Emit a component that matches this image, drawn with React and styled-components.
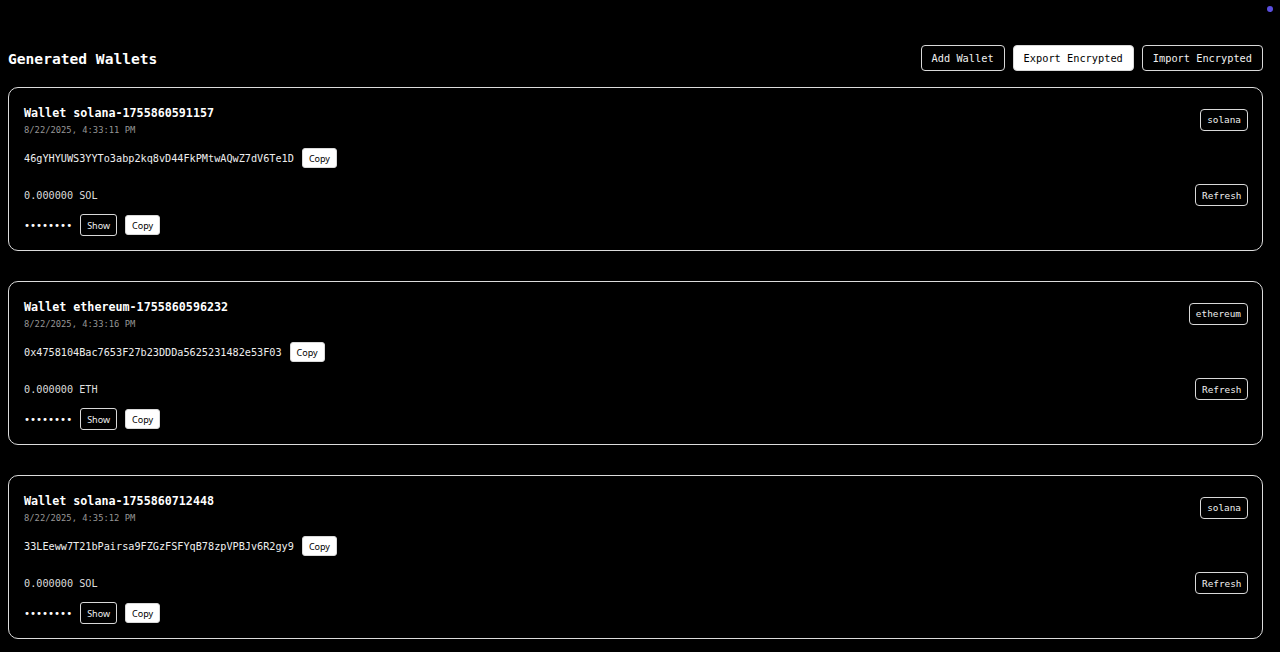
import React from 'react';
import styled, { createGlobalStyle } from 'styled-components';

const GlobalStyle = createGlobalStyle`
  html, body {
    margin: 0;
    padding: 0;
    background: #000;
    color: #fff;
    font-family: "DejaVu Sans Mono", "Liberation Mono", monospace;
  }
`;

const Page = styled.div`
  position: relative;
  min-height: 652px;
  padding: 45px 17px 20px 8px;
  box-sizing: border-box;
`;

const StatusDot = styled.span`
  position: absolute;
  top: 6px;
  right: 7px;
  width: 6px;
  height: 6px;
  border-radius: 50%;
  background: #5b4fe0;
`;

const TopBar = styled.div`
  display: flex;
  align-items: center;
  justify-content: space-between;
  margin-bottom: 16px;
`;

const Heading = styled.h2`
  margin: 0;
  font-size: 14.6px;
  font-weight: bold;
  letter-spacing: 0;
`;

const Actions = styled.div`
  display: flex;
  gap: 8px;
`;

const Button = styled.button`
  font-family: "DejaVu Sans Mono", monospace;
  font-size: ${(p) => (p.small ? '9.4px' : '10.3px')};
  height: ${(p) => (p.small ? '22px' : '26px')};
  padding: 0 ${(p) => (p.small ? '5.5px' : '10px')};
  border-radius: 4px;
  border: 1px solid #d9d9d9;
  background: ${(p) => (p.filled ? '#fff' : '#000')};
  color: ${(p) => (p.filled ? '#000' : '#f0f0f0')};
  cursor: pointer;
`;

const MiniButton = styled.button`
  font-family: "Noto Sans", "Liberation Sans", sans-serif;
  font-size: 9px;
  height: ${(p) => (p.filled ? '20px' : '22px')};
  padding: 0 6px;
  border-radius: 3px;
  border: 1px solid #d9d9d9;
  background: ${(p) => (p.filled ? '#fff' : '#000')};
  color: ${(p) => (p.filled ? '#000' : '#f0f0f0')};
`;

const List = styled.div`
  display: flex;
  flex-direction: column;
  gap: 30px;
`;

const Card = styled.div`
  border: 1px solid #dcdcdc;
  border-radius: 10px;
  padding: 17px 14px 14px 15px;
  height: 164px;
  box-sizing: border-box;
  display: flex;
  flex-direction: column;
`;

const Row = styled.div`
  display: flex;
  align-items: center;
  justify-content: space-between;
`;

const Title = styled.div`
  font-size: 11.7px;
  font-weight: bold;
  line-height: 16px;
`;

const DateText = styled.div`
  font-size: 8.8px;
  color: #969696;
  margin-top: 4px;
`;

const Badge = styled.span`
  font-size: 9.4px;
  height: 22px;
  line-height: 20px;
  padding: 0 6px;
  border: 1px solid #d9d9d9;
  border-radius: 4px;
  box-sizing: border-box;
  color: #eee;
`;

const AddressRow = styled.div`
  display: flex;
  align-items: center;
  gap: 8px;
  margin-top: 13px;
  font-size: 10.2px;
  color: #eee;
`;

const BalanceRow = styled(Row)`
  margin-top: 16px;
  font-size: 10.2px;
  color: #ddd;
`;

const KeyRow = styled.div`
  display: flex;
  align-items: center;
  gap: 8px;
  margin-top: 8px;
`;

const Dots = styled.span`
  font-size: 10px;
  color: #fff;
`;

const wallets = [
  {
    name: 'solana-1755860591157',
    date: '8/22/2025, 4:33:11 PM',
    address: '46gYHYUWS3YYTo3abp2kq8vD44FkPMtwAQwZ7dV6Te1D',
    chain: 'solana',
    symbol: 'SOL',
  },
  {
    name: 'ethereum-1755860596232',
    date: '8/22/2025, 4:33:16 PM',
    address: '0x4758104Bac7653F27b23DDDa5625231482e53F03',
    chain: 'ethereum',
    symbol: 'ETH',
  },
  {
    name: 'solana-1755860712448',
    date: '8/22/2025, 4:35:12 PM',
    address: '33LEeww7T21bPairsa9FZGzFSFYqB78zpVPBJv6R2gy9',
    chain: 'solana',
    symbol: 'SOL',
  },
];

function WalletCard({ wallet }) {
  return (
    <Card>
      <Row>
        <div>
          <Title>Wallet {wallet.name}</Title>
          <DateText>{wallet.date}</DateText>
        </div>
        <Badge>{wallet.chain}</Badge>
      </Row>
      <AddressRow>
        <span>{wallet.address}</span>
        <MiniButton filled>Copy</MiniButton>
      </AddressRow>
      <BalanceRow>
        <span>0.000000 {wallet.symbol}</span>
        <Button small>Refresh</Button>
      </BalanceRow>
      <KeyRow>
        <Dots>••••••••</Dots>
        <MiniButton>Show</MiniButton>
        <MiniButton filled>Copy</MiniButton>
      </KeyRow>
    </Card>
  );
}

export default function App() {
  return (
    <>
      <GlobalStyle />
      <Page>
        <StatusDot />
        <TopBar>
          <Heading>Generated Wallets</Heading>
          <Actions>
            <Button>Add Wallet</Button>
            <Button filled>Export Encrypted</Button>
            <Button>Import Encrypted</Button>
          </Actions>
        </TopBar>
        <List>
          {wallets.map((w) => (
            <WalletCard key={w.name} wallet={w} />
          ))}
        </List>
      </Page>
    </>
  );
}
